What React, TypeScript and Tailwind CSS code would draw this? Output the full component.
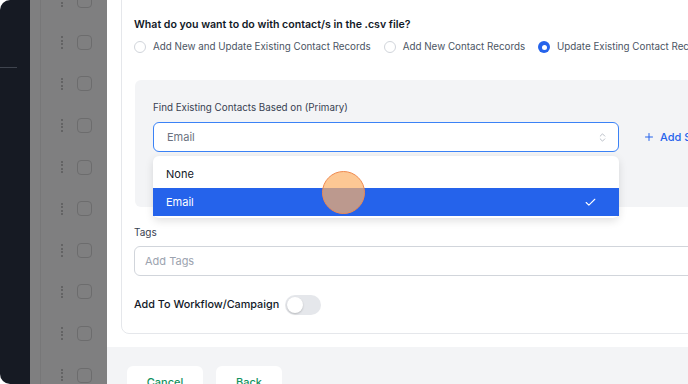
import { Check, ChevronsUpDown, Plus } from "lucide-react";

const rows = Array.from({ length: 10 });

const Radio = ({ checked, label }: { checked?: boolean; label: string }) => (
  <label className="flex items-center gap-[7px]">
    {checked ? (
      <span className="w-[12px] h-[12px] rounded-full bg-[#2563eb] flex items-center justify-center">
        <span className="w-[5px] h-[5px] rounded-full bg-white" />
      </span>
    ) : (
      <span className="w-[12px] h-[12px] rounded-full border border-[#d1d5db] bg-white" />
    )}
    <span className="text-[9.8px] leading-[14px] text-[#4b5563] whitespace-nowrap">{label}</span>
  </label>
);

export default function App() {
  return (
    <div className="w-[688px] h-[384px] bg-white overflow-hidden font-['Inter',sans-serif]">
      <div className="flex h-full rounded-l-[10px] overflow-hidden">
        {/* dark sidebar */}
        <div className="w-[30px] shrink-0 bg-[#161a23] pt-[67px]">
          <div className="w-[17px] h-px bg-[#3f444e]" />
        </div>

        {/* dimmed list behind the modal */}
        <div className="w-[77px] shrink-0 bg-[#7f7f80] flex">
          <div className="w-[11px] border-r border-[#777778]" />
          <div className="flex-1 flex flex-col mt-[-20px]">
            {rows.map((_, i) => (
              <div key={i} className="h-[41.6px] shrink-0 flex items-center pl-[20px] gap-[14px]">
                <div className="flex flex-col gap-[1.5px]">
                  <span className="w-[2px] h-[2px] rounded-full bg-[#5a5a5b]" />
                  <span className="w-[2px] h-[2px] rounded-full bg-[#5a5a5b]" />
                  <span className="w-[2px] h-[2px] rounded-full bg-[#5a5a5b]" />
                  <span className="w-[2px] h-[2px] rounded-full bg-[#5a5a5b]" />
                </div>
                <span className="w-[15px] h-[15px] rounded-[4px] border border-[#6c6c6d]" />
              </div>
            ))}
          </div>
        </div>

        {/* modal body */}
        <div className="flex-1 flex flex-col overflow-hidden">
          <div className="h-[347px] shrink-0 bg-white pl-[14px]">
            <div className="mt-[-20px] h-[354px] w-[620px] rounded-lg border border-[#e5e7eb] pl-[12px] pt-[37px]">
              <p className="text-[10.6px] leading-[14px] font-semibold text-[#111827] whitespace-nowrap">
                What do you want to do with contact/s in the .csv file?
              </p>
              <div className="mt-[8px] flex items-center gap-[13px]">
                <Radio label="Add New and Update Existing Contact Records" />
                <Radio label="Add New Contact Records" />
                <Radio checked label="Update Existing Contact Records" />
              </div>

              <div className="mt-[26px] ml-px h-[127px] w-[600px] rounded-md bg-[#f3f4f6] pl-[18px] pt-[21px]">
                <p className="text-[9.8px] leading-[14px] text-[#374151]">Find Existing Contacts Based on (Primary)</p>
                <div className="mt-[7px] flex items-center gap-[24px]">
                  <div className="relative w-[466px] shrink-0">
                    <div className="h-[30px] rounded-md border-[1.5px] border-[#3b82f6] bg-white flex items-center justify-between pl-[13px] pr-[10px]">
                      <span className="text-[11px] text-[#6b7280]">Email</span>
                      <ChevronsUpDown size={11} strokeWidth={1.5} className="text-[#9ca3af]" />
                    </div>
                    <div className="absolute left-0 top-[34px] w-full z-10 bg-white rounded-md shadow-[0_3px_8px_rgba(0,0,0,0.12)] pt-[4px] pb-[2px]">
                      <div className="h-[28px] flex items-center pl-[13px] text-[11px] text-[#111827]">None</div>
                      <div className="h-[28px] flex items-center justify-between pl-[13px] pr-[22px] bg-[#2563eb] text-[11px] text-white">
                        <span>Email</span>
                        <Check size={13} strokeWidth={2} />
                      </div>
                    </div>
                  </div>
                  <div className="flex items-center gap-[5px] text-[#2563eb] whitespace-nowrap">
                    <Plus size={12} strokeWidth={2} />
                    <span className="text-[11px] font-medium">Add Secondary Field</span>
                  </div>
                </div>
              </div>

              <p className="mt-[18px] text-[10px] leading-[14px] text-[#374151]">Tags</p>
              <div className="mt-[7px] h-[30px] w-[600px] rounded-md border border-[#d1d5db] bg-white flex items-center pl-[10px]">
                <span className="text-[11px] text-[#9ca3af]">Add Tags</span>
              </div>

              <div className="mt-[19px] flex items-center gap-[6px]">
                <span className="text-[10.8px] leading-[20px] font-medium text-[#111827]">Add To Workflow/Campaign</span>
                <span className="w-[36px] h-[20px] rounded-full bg-[#e5e7eb] flex items-center pl-[2px]">
                  <span className="w-[16px] h-[16px] rounded-full bg-white shadow-[0_1px_2px_rgba(0,0,0,0.2)]" />
                </span>
              </div>
            </div>
          </div>

          <div className="flex-1 bg-[#f3f4f6] pl-[20px] pt-[19px] flex gap-[13px]">
            <button className="w-[76px] h-[32px] rounded-md bg-white text-[11px] font-medium text-[#15935f]">Cancel</button>
            <button className="w-[66px] h-[32px] rounded-md bg-white text-[11px] font-medium text-[#15935f]">Back</button>
          </div>
        </div>
      </div>

      {/* click highlight */}
      <div className="absolute left-[322px] top-[171px] w-[43px] h-[43px] rounded-full bg-[#fcb167]/70 border-[1.5px] border-[#ef8a50] z-20" />
    </div>
  );
}
